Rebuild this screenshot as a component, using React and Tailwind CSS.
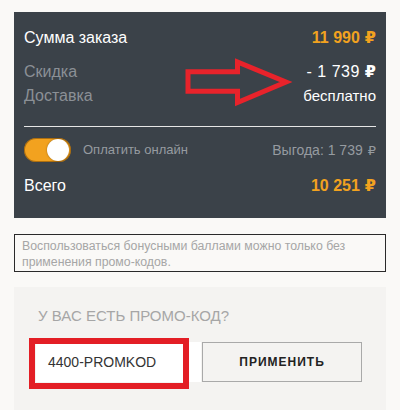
import React from "react";

const font = { fontFamily: '"Liberation Sans", Arial, sans-serif' };
const rub = { fontFamily: '"DejaVu Sans", sans-serif' };

function Rub({ className = "" }) {
  return (
    <span className={"ml-[5px] " + className} style={rub}>
      ₽
    </span>
  );
}

function Arrow() {
  return (
    <svg
      className="absolute left-[158px] top-[34px]"
      width="124"
      height="64"
      viewBox="0 0 124 64"
      fill="none"
    >
      <polygon
        points="16,25.8 65.5,25.8 65.5,16 114,36 65.5,56.5 65.5,45.2 16,45.2"
        stroke="#e8232b"
        strokeWidth="5"
        strokeLinejoin="miter"
      />
    </svg>
  );
}

function Toggle() {
  return (
    <div className="relative h-[24px] w-[47px] rounded-full bg-[#f2a21f] shadow-[inset_0_0_0_1px_rgba(120,70,0,0.55)]">
      <div className="absolute right-[2px] top-[1px] h-[22px] w-[22px] rounded-full bg-white shadow-[0_0_2px_rgba(0,0,0,0.4)]" />
    </div>
  );
}

export default function App() {
  return (
    <div
      className="h-[410px] w-[400px] overflow-hidden bg-[#faf9f7] px-[14px] pt-[12px]"
      style={font}
    >
      {/* order totals */}
      <div className="relative bg-[#3b4249] px-[10px] pb-[22px] pt-[16px]">
        <Arrow />
        <div className="flex h-[20px] items-center justify-between text-[16px] leading-[20px]">
          <span className="text-white">Сумма заказа</span>
          <span className="font-bold text-[#f2a21f]">
            11 990
            <Rub />
          </span>
        </div>
        <div className="mt-[14px] flex h-[20px] items-center justify-between text-[16px] leading-[20px]">
          <span className="text-[#8b9096]">Скидка</span>
          <span className="tracking-[0.5px] text-white">
            - 1 739
            <Rub className="font-bold tracking-normal" />
          </span>
        </div>
        <div className="mt-[4px] flex h-[20px] items-center justify-between text-[16px] leading-[20px]">
          <span className="text-[#8b9096]">Доставка</span>
          <span className="text-[15px] text-white">бесплатно</span>
        </div>
        <div className="mt-[20px] h-px bg-[#e6e6e6]" />
        <div className="mt-[11px] flex h-[24px] items-center justify-between">
          <div className="flex items-center gap-[12px]">
            <Toggle />
            <span className="text-[13px] text-[#969ba0]">Оплатить онлайн</span>
          </div>
          <span className="text-[14px] text-[#969ba0]">
            Выгода: 1 739
            <Rub className="text-[13px]" />
          </span>
        </div>
        <div className="mt-[14px] flex h-[20px] items-center justify-between text-[16px] leading-[20px]">
          <span className="text-white">Всего</span>
          <span className="font-bold text-[#f2a21f]">
            10 251
            <Rub />
          </span>
        </div>
      </div>

      {/* bonus notice */}
      <div className="mt-[16px] border border-[#2a2a2a] px-[7px] pb-[1px] pt-[3px] text-[12.3px] leading-[16px] text-[#a6a6a6]">
        Воспользоваться бонусными баллами можно только без
        <br />
        применения промо-кодов.
      </div>

      {/* promo code */}
      <div className="relative mt-[15px] h-[140px] bg-[#f4f3f1] pl-[22px] pt-[20px]">
        <div className="pl-[2px] text-[15px] uppercase leading-[18px] text-[#a6a6a6]">
          У вас есть промо-код?
        </div>
        <div className="mt-[17px] flex gap-px">
          <div className="flex h-[40px] w-[165px] items-center bg-white pl-[12px] text-[14px] text-[#333]">
            4400-PROMKOD
          </div>
          <button className="flex h-[40px] w-[160px] items-center justify-center border border-[#a9a9a9] bg-[#f4f3f1] text-[12px] font-bold tracking-[1px] text-[#222]">
            ПРИМЕНИТЬ
          </button>
        </div>
        <div className="absolute left-[15px] top-[51px] h-[51px] w-[160px] border-[6px] border-[#e31e25]" />
      </div>
    </div>
  );
}
